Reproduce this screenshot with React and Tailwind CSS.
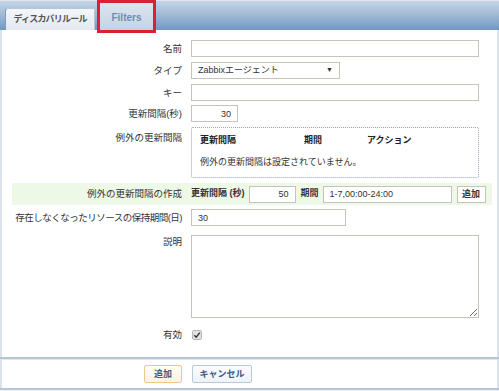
import React from "react";

const font = "font-['Liberation_Sans','Noto_Sans_CJK_JP',sans-serif]";

function Row({ label, children, className = "", labelClass = "" }) {
  return (
    <div className={`flex ${className}`}>
      <div className={`w-[180px] shrink-0 text-right text-[9.5px] text-[#333] leading-none ${labelClass}`}>
        {label}
      </div>
      <div className="ml-[9px] flex items-center">{children}</div>
    </div>
  );
}

const inputCls =
  "h-[17px] border border-[#c4c4bc] bg-white px-[6px] text-[9px] text-[#333] outline-none";

export default function App() {
  return (
    <div className={`w-[499px] h-[391px] overflow-hidden bg-white ${font}`}>
      {/* tab header */}
      <div className="h-[30px] flex items-start pl-[5px] bg-gradient-to-b from-[#c5d5e6] via-[#9db8d5] to-[#7098c3] border-t border-[#dfe7f0]">
        <div className="mt-[7px] h-[22px] w-[90px] flex items-center justify-center rounded-tl-[3px] border border-b-0 border-[#b7c6d6] border-l-[#7f9cbc] bg-gradient-to-b from-[#f3f6f9] to-[#e3e9ef]">
          <span className="text-[9px] font-bold tracking-[-0.8px] text-[#555] leading-none">ディスカバリルール</span>
        </div>
        <div className="relative z-10 -mt-px ml-[2px] h-[33px] w-[59px] border-[3px] border-[#d8222e] bg-gradient-to-b from-[#dce5ef] to-[#c4d3e3] flex items-center justify-center">
          <span className="text-[10px] font-bold text-[#6f8db0] leading-none pt-[2px]">Filters</span>
        </div>
      </div>

      {/* form body */}
      <div className="h-[327px] border-x-2 border-[#dde2e8] flex flex-col pt-[10px]">
        <Row label="名前" className="items-center">
          <input className={`${inputCls} w-[288px]`} defaultValue="" />
        </Row>
        <Row label="タイプ" className="items-center mt-[5px]">
          <div className="h-[17px] w-[149px] border border-[#c4c4bc] bg-white flex items-center justify-between pl-[6px] pr-[6px] text-[9px] text-[#333]">
            <span>Zabbixエージェント</span>
            <span className="text-[7px]">▼</span>
          </div>
        </Row>
        <Row label="キー" className="items-center mt-[5px]">
          <input className={`${inputCls} w-[288px]`} defaultValue="" />
        </Row>
        <Row label="更新間隔(秒)" className="items-center mt-[4px]">
          <input className={`${inputCls} w-[47px] text-right`} defaultValue="30" />
        </Row>
        <Row label="例外の更新間隔" className="mt-[5px]" labelClass="pt-[6px]">
          <div className="w-[288px] h-[51px] border border-dotted border-[#9aa4b2] rounded-[2px] px-[8px] pt-[8px] text-[9px] text-[#333]">
            <div className="flex font-bold text-[#222] leading-none">
              <span className="w-[104px]">更新間隔</span>
              <span className="w-[63px]">期間</span>
              <span>アクション</span>
            </div>
            <div className="mt-[13px] leading-none">例外の更新間隔は設定されていません。</div>
          </div>
        </Row>

        <div className="mt-[5px] ml-[10px] mr-[5px] h-[22px] bg-[#eef8e6] flex items-center">
          <div className="w-[170px] shrink-0 text-right text-[9.5px] text-[#333] leading-none">例外の更新間隔の作成</div>
          <div className="ml-[9px] flex items-center text-[9px] text-[#333]">
            <span className="font-bold">更新間隔 (秒)</span>
            <input className={`${inputCls} ml-[4px] w-[47px] text-right`} defaultValue="50" />
            <span className="ml-[5px] font-bold">期間</span>
            <input className={`${inputCls} ml-[4px] w-[129px]`} defaultValue="1-7,00:00-24:00" />
            <button className="ml-[5px] h-[17px] w-[29px] border border-[#c4c4bc] bg-white text-[9px] font-bold text-[#333] leading-none">
              追加
            </button>
          </div>
        </div>

        <Row label="存在しなくなったリソースの保持期間(日)" className="items-center mt-[4px]" labelClass="tracking-[-0.5px]">
          <input className={`${inputCls} w-[155px]`} defaultValue="30" />
        </Row>
        <Row label="説明" className="mt-[9px]" labelClass="pt-[2px]">
          <textarea readOnly className="w-[288px] h-[83px] border border-[#c4c4bc] bg-white outline-none resize" />
        </Row>
        <Row label="有効" className="items-center mt-[12px]">
          <svg width="10" height="10" viewBox="0 0 10 10" className="ml-px">
            <rect x="0.5" y="0.5" width="9" height="9" rx="1.5" fill="#e2e2e2" stroke="#b5b5b5" />
            <path d="M2.3 5.2 L4.2 7.2 L7.8 2.6" fill="none" stroke="#333" strokeWidth="1.4" />
          </svg>
        </Row>
      </div>

      {/* footer */}
      <div className="border-t-[2px] border-[#b4c6d8]">
        <div className="border-t border-[#dfe7ef] h-[29px] border-x-2 border-x-[#dde2e8] flex items-center pl-[142px] gap-[10px]">
          <button className="h-[18px] w-[38px] rounded-[2px] border border-[#f0c88e] bg-gradient-to-b from-[#fffdf8] to-[#fbf2e4] text-[9px] font-bold text-[#3d5a7c] leading-none">
            追加
          </button>
          <button className="h-[18px] w-[60px] rounded-[2px] border border-[#b9c8da] bg-gradient-to-b from-[#fafcfe] to-[#eef3f8] text-[9px] font-bold text-[#3d5a7c] leading-none">
            キャンセル
          </button>
        </div>
        <div className="h-[3px] border-t-2 border-[#b4c6d8] bg-[#eef2f6]" />
      </div>
    </div>
  );
}
